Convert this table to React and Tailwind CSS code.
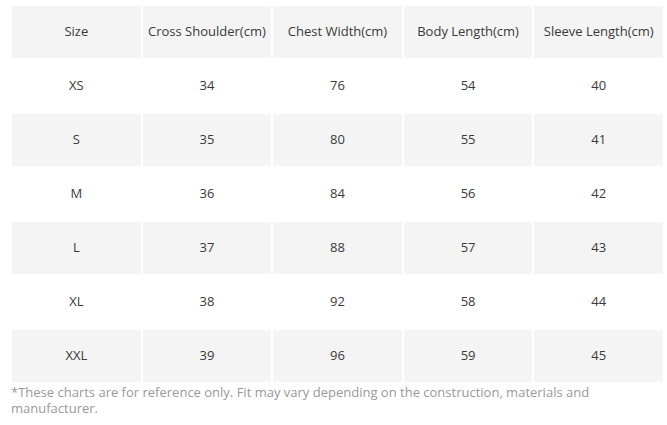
import React from 'react'

const headers = ['Size', 'Cross Shoulder(cm)', 'Chest Width(cm)', 'Body Length(cm)', 'Sleeve Length(cm)']

const rows = [
  ['XS', 34, 76, 54, 40],
  ['S', 35, 80, 55, 41],
  ['M', 36, 84, 56, 42],
  ['L', 37, 88, 57, 43],
  ['XL', 38, 92, 58, 44],
  ['XXL', 39, 96, 59, 45],
]

export default function App() {
  return (
    <div className="w-[667px] h-[425px] bg-white pt-[4px] pl-[10px] font-['Open_Sans',sans-serif] text-[13px] text-[#3a3a3a]">
      <table className="w-[655px] table-fixed border-separate border-spacing-[2px]">
        <thead>
          <tr>
            {headers.map(h => (
              <th key={h} className="h-[52px] bg-[#f4f4f4] font-normal text-center align-middle">{h}</th>
            ))}
          </tr>
        </thead>
        <tbody>
          {rows.map((r, i) => (
            <tr key={r[0]}>
              {r.map((c, j) => (
                <td key={j} className={`h-[52px] text-center align-middle ${i % 2 === 1 ? 'bg-[#f4f4f4]' : 'bg-white'}`}>{c}</td>
              ))}
            </tr>
          ))}
        </tbody>
      </table>
      <p className="pl-[1px] pr-[60px] text-[#999] leading-[16px]">
        *These charts are for reference only. Fit may vary depending on the construction, materials and manufacturer.
      </p>
    </div>
  )
}
